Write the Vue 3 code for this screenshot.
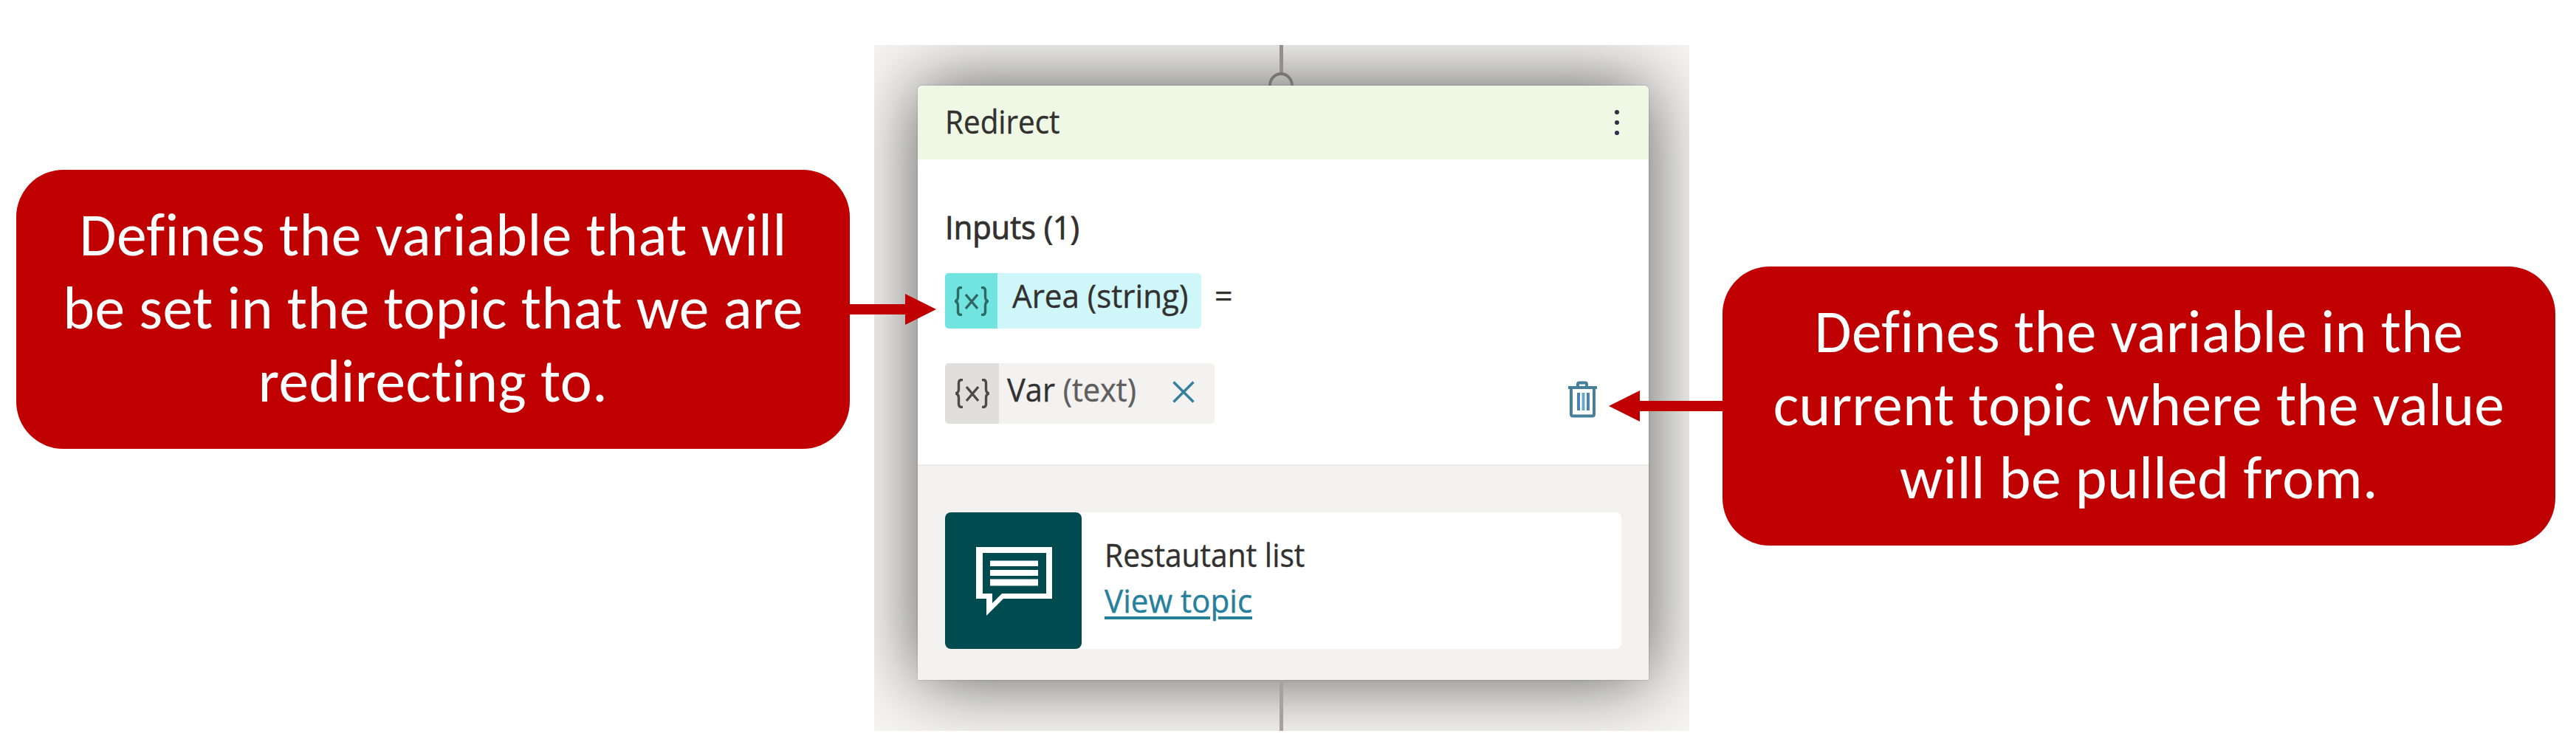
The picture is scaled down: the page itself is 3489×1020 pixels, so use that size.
<script setup>
const leftLines = [
  'Defines the variable that will',
  'be set in the topic that we are',
  'redirecting to.',
]
const rightLines = [
  'Defines the variable in the',
  'current topic where the value',
  'will be pulled from.',
]

// Condenses or widens a run of text to the given advance width.
const vFit = {
  mounted(el, { value }) {
    const natural = el.offsetWidth
    el.style.transform = `scaleX(${value / natural})`
  },
}
</script>

<template>
  <main class="stage">
    <aside class="callout callout-left">
      <p v-for="line in leftLines" :key="line" class="callout-line">{{ line }}</p>
      <svg class="arrow arrow-right" width="119" height="42" viewBox="0 0 119 42">
        <path d="M0 14H76V0L118 21L76 42V28H0Z" fill="#c00000" />
      </svg>
    </aside>

    <section class="canvas">
      <div class="connector-top">
        <span class="line"></span>
        <span class="ring"></span>
      </div>
      <article class="card">
        <header class="card-header">
          <span v-fit="156" class="fit">Redirect</span>
          <svg class="dots" width="8" height="36" viewBox="0 0 8 36">
            <circle cx="4" cy="4" r="3" />
            <circle cx="4" cy="18" r="3" />
            <circle cx="4" cy="32" r="3" />
          </svg>
        </header>

        <div class="card-body">
          <h2 class="inputs"><span v-fit="182" class="fit">Inputs (1)</span></h2>
          <div class="row row-target">
            <div class="chip chip-target">
              <span class="glyph">
                <svg width="48" height="40" viewBox="0 0 48 40">
                  <path d="M11 1.500H9.500Q5.500 1.500 5.500 6V14Q5.500 19 1.500 20Q5.500 21 5.500 26V34Q5.500 38.500 9.500 38.500H11M37 1.500H38.500Q42.500 1.500 42.500 6V14Q42.500 19 46.500 20Q42.500 21 42.500 26V34Q42.500 38.500 38.500 38.500H37M16 11L32 30M32 11L16 30" />
                </svg>
              </span>
              <span class="chip-text"><span v-fit="238" class="fit">Area (string)</span></span>
            </div>
            <span class="equals">=</span>
          </div>
          <div class="row row-source">
            <div class="chip chip-source">
              <span class="glyph">
                <svg width="48" height="40" viewBox="0 0 48 40">
                  <path d="M11 1.500H9.500Q5.500 1.500 5.500 6V14Q5.500 19 1.500 20Q5.500 21 5.500 26V34Q5.500 38.500 9.500 38.500H11M37 1.500H38.500Q42.500 1.500 42.500 6V14Q42.500 19 46.500 20Q42.500 21 42.500 26V34Q42.500 38.500 38.500 38.500H37M16 11L32 30M32 11L16 30" />
                </svg>
              </span>
              <span class="chip-text"><span v-fit="175" class="fit">Var <span class="muted">(text)</span></span></span>
              <svg class="close" width="30" height="30" viewBox="0 0 30 30">
                <path d="M1.500 1.500L28.500 28.500M28.500 1.500L1.500 28.500" />
              </svg>
            </div>
            <svg class="trash" width="42" height="51" viewBox="0 0 42 51">
              <path d="M1 9H40M14 9V4.500Q14 2.500 16 2.500H24Q26 2.500 26 4.500V9M5 9V45Q5 47.500 7.500 47.500H33.500Q36 47.500 36 45V9" fill="none" stroke="#477f99" stroke-width="4" />
              <path d="M15 16V40M28 16V40" stroke="#4c83b5" stroke-width="4" />
              <path d="M21.500 16V40" stroke="#65a9cd" stroke-width="4" />
            </svg>
          </div>
        </div>

        <footer class="card-footer">
          <div class="topic">
            <div class="topic-icon">
              <svg width="104" height="94" viewBox="0 0 104 94">
                <path fill-rule="evenodd" fill="#fff" d="M0 0H103V70H37L14 93V70H0ZM9 8V63H22V76L35 63H95V8Z" />
                <path fill="#fff" d="M19 18.500H84V26H19ZM19 31H84V39H19ZM19 43.500H84V52.500H19Z" />
              </svg>
            </div>
            <div class="topic-text">
              <span class="topic-name"><span v-fit="271" class="fit">Restautant list</span></span>
              <a class="topic-link"><span v-fit="200" class="fit">View topic</span></a>
            </div>
          </div>
        </footer>
      </article>
      <div class="connector-bottom"><span class="line"></span></div>
    </section>

    <aside class="callout callout-right">
      <p v-for="line in rightLines" :key="line" class="callout-line">{{ line }}</p>
      <svg class="arrow arrow-left" width="155" height="42" viewBox="0 0 155 42">
        <path d="M155 14H42V0L0 21L42 42V28H155Z" fill="#c00000" />
      </svg>
    </aside>
  </main>
</template>

<style>
body {
  background: #fff;
}
</style>

<style scoped>
.stage {
  display: flex;
  align-items: flex-start;
  box-sizing: border-box;
  width: 3489px;
  height: 1020px;
  padding-left: 22px;
  overflow: hidden;
  font-family: "Open Sans", "Noto Sans", sans-serif;
  font-size: 43px;
  color: #323130;
}

.callout {
  position: relative;
  z-index: 1;
  box-sizing: border-box;
  flex: none;
  width: 1129px;
  height: 378px;
  padding-top: 39px;
  border-radius: 64px;
  background: #c00000;
  color: #fff;
  font-family: Calibri, Carlito, Lato, sans-serif;
  font-size: 81.5px;
  font-variant-ligatures: none;
  letter-spacing: 0.4px;
}
.callout-left {
  margin-top: 230px;
}
.callout-right {
  width: 1128px;
  margin-top: 361px;
  margin-left: 45px;
}
.callout-line {
  margin: 0;
  line-height: 99px;
  text-align: center;
  white-space: nowrap;
}
.fit {
  display: inline-block;
  white-space: nowrap;
  transform-origin: left center;
}
.arrow {
  position: absolute;
}
.arrow-right {
  left: 1128px;
  top: 168px;
}
.arrow-left {
  right: 1127px;
  top: 168px;
}

.canvas {
  display: flex;
  flex-direction: column;
  flex: none;
  box-sizing: border-box;
  width: 1104px;
  height: 929px;
  margin: 61px 0 0 33px;
  padding: 0 55px 0 59px;
  overflow: hidden;
  background: #f6f5f3;
}
.connector-top,
.connector-bottom {
  position: relative;
  z-index: 1;
  display: flex;
  flex-direction: column;
  align-items: center;
  box-sizing: border-box;
  padding-right: 6px;
}
.connector-top {
  height: 55px;
  overflow: hidden;
}
.connector-top .line {
  flex: none;
  height: 38px;
  background: #91908f;
}
.connector-bottom {
  height: 69px;
}
.connector-bottom .line {
  height: 69px;
  background: #a5a2a0;
}
.line {
  width: 5px;
}
.ring {
  flex: none;
  box-sizing: border-box;
  width: 34px;
  height: 36px;
  margin-top: -1px;
  border: 4px solid #767675;
  border-radius: 50%;
}

.card {
  display: flex;
  flex-direction: column;
  width: 990px;
  height: 805px;
  border-radius: 6px 6px 0 0;
  background: #fff;
  box-shadow: 0 0 100px rgba(0, 0, 0, 0.64), 0 0 3px rgba(0, 0, 0, 0.2);
  -webkit-text-stroke: 0.4px currentColor;
}
.card-header {
  display: flex;
  align-items: center;
  justify-content: space-between;
  box-sizing: border-box;
  height: 100px;
  padding: 0 39px 4px 37px;
  border-radius: 6px 6px 0 0;
  background: #eff8e4;
}
.dots {
  margin-top: 4px;
  fill: #33304a;
}
.card-body {
  box-sizing: border-box;
  height: 413px;
  padding: 62px 69px 0 37px;
}
.inputs {
  margin: 0;
  font-size: 43px;
  font-weight: 500;
  line-height: 60px;
  -webkit-text-stroke: 0.9px currentColor;
}
.row {
  display: flex;
}
.row-target {
  margin-top: 32px;
}
.row-source {
  justify-content: space-between;
  margin-top: 47px;
}
.chip {
  display: flex;
  overflow: hidden;
  border-radius: 5px;
}
.chip-target {
  width: 347px;
  height: 75px;
  background: #cff6f9;
}
.chip-source {
  width: 365px;
  height: 82px;
  background: #f3f2f1;
}
.glyph {
  display: flex;
  align-items: center;
  justify-content: center;
  flex: none;
  width: 71px;
  padding-top: 1px;
}
.glyph path {
  fill: none;
  stroke: #4a4a49;
  stroke-width: 3.4px;
}
.chip-target .glyph {
  background: #71e4df;
}
.chip-target .glyph path {
  stroke: #306765;
}
.chip-source .glyph {
  width: 73px;
  padding: 0;
  background: #e1dfdd;
}
.chip-text {
  flex: none;
  white-space: nowrap;
}
.chip-target .chip-text {
  width: 240px;
  padding-left: 20px;
  line-height: 62px;
}
.chip-source .chip-text {
  width: 224px;
  padding-left: 11px;
  line-height: 72px;
}
.muted {
  color: #605e5c;
}
.close {
  flex: none;
  margin-top: 24px;
  fill: none;
  stroke: #367f9d;
  stroke-width: 3.5px;
}
.equals {
  margin-left: 18px;
  line-height: 62px;
}
.trash {
  margin: 24px -1px 0 0;
}

.card-footer {
  box-sizing: border-box;
  height: 292px;
  padding: 63px 37px 0;
  border-top: 2px solid #edeceb;
  background: #f3f2f1;
}
.topic {
  display: flex;
  height: 185px;
  border-radius: 8px;
  background: #fff;
}
.topic-icon {
  box-sizing: border-box;
  width: 185px;
  padding: 47px 0 0 42px;
  border-radius: 8px;
  background: #004b50;
}
.topic-text {
  display: flex;
  flex-direction: column;
  padding: 27px 0 0 31px;
  line-height: 62px;
}
.topic-link {
  color: #26809c;
}
.topic-link .fit {
  text-decoration: underline;
  text-decoration-thickness: 4px;
  text-underline-offset: 5px;
}
</style>
